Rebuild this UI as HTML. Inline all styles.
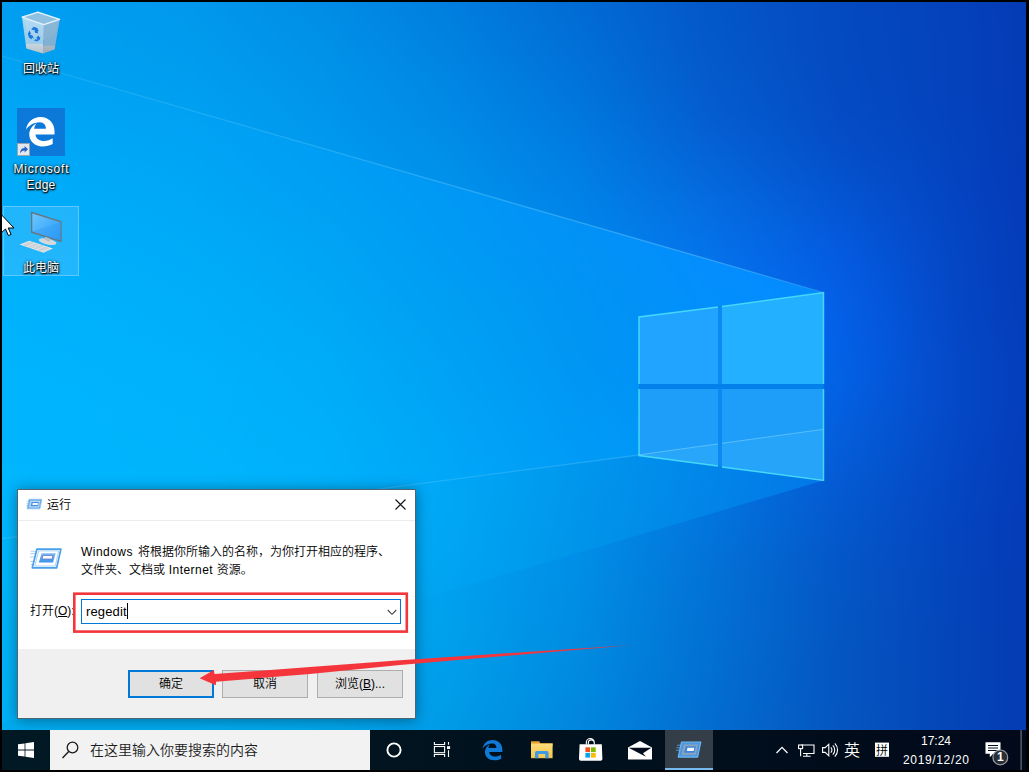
<!DOCTYPE html>
<html lang="zh-CN">
<head>
<meta charset="utf-8">
<title>运行</title>
<style>
*{box-sizing:border-box;margin:0;padding:0}
html,body{width:1029px;height:772px;overflow:hidden;background:#000}
body{position:relative;font-family:"Liberation Sans","Noto Sans CJK SC",sans-serif;font-size:12px;color:#000;font-weight:350}
.abs{position:absolute}
#wall{position:absolute;left:0;top:0;width:1029px;height:772px;display:block}
/* desktop icons */
.dlabel{position:absolute;width:76px;text-align:center;color:#fff;font-size:12px;line-height:17px;font-weight:400;
 text-shadow:0 1px 2px rgba(0,0,0,.95),0 0 3px rgba(0,0,0,.8),1px 1px 1px rgba(0,0,0,.9)}
#sel{position:absolute;left:3px;top:206px;width:76px;height:70px;background:rgba(120,200,255,.28);border:1px solid rgba(150,215,255,.55)}
/* taskbar */
#taskbar{position:absolute;left:2px;top:730px;width:1024px;height:40px;
 background:linear-gradient(90deg,#011924 0%,#01141f 36%,#010e1c 72%,#02091a 100%)}
#search{position:absolute;left:48px;top:0;width:320px;height:40px;background:#f2f2f2;color:#1b1b1b;font-size:14px;line-height:40px;padding-left:40px;white-space:nowrap}
#active{position:absolute;left:663px;top:0;width:48px;height:40px;background:#343e49}
#active i{position:absolute;left:0;bottom:0;width:48px;height:2px;background:#76b9ed}
.tray{position:absolute;color:#fff;white-space:nowrap}
/* dialog */
#dlg{position:absolute;left:17px;top:489px;width:399px;height:230px;background:#fff;border:1px solid rgba(8,40,62,.72);box-shadow:0 1px 13px rgba(0,0,0,.38)}
#dlg .title{position:absolute;left:29px;top:7px;font-size:12px;line-height:17px}
#dlg .sep{position:absolute;left:0;top:30px;width:397px;height:1px;background:#ececec}
#dlg .msg{position:absolute;left:63px;top:53px;font-size:12px;line-height:18px;white-space:nowrap;word-spacing:1.800px}
.ls{letter-spacing:.45px}
#dlg .lbl{position:absolute;left:12px;top:113px;font-size:12px;line-height:17px}
#dlg .inp{position:absolute;left:63px;top:109px;width:320px;height:25px;border:1px solid #0078d7;background:#fff;font-size:13px;line-height:23px;padding-left:4px;letter-spacing:.15px}
#dlg .foot{position:absolute;left:0;top:159px;width:397px;height:69px;background:#f0f0f0}
.btn{position:absolute;top:180px;width:86px;height:28px;background:#e1e1e1;border:1px solid #adadad;text-align:center;font-size:12px;line-height:27px}
.btn.def{border:2px solid #0078d7;line-height:25px}
u{text-decoration:underline}
.caret{display:inline-block;width:1px;height:16px;background:#000;vertical-align:-3px}
</style>
</head>
<body>
<svg id="wall" width="1029" height="772" viewBox="0 0 1029 772">
<defs>
<linearGradient id="u0" gradientUnits="userSpaceOnUse" x1="-64" y1="0" x2="1093" y2="0"><stop offset="0" stop-color="#009bf0"/><stop offset="0.1111" stop-color="#0099ee"/><stop offset="0.2222" stop-color="#0094ea"/><stop offset="0.3333" stop-color="#0088e4"/><stop offset="0.4444" stop-color="#0079dc"/><stop offset="0.5556" stop-color="#0168d2"/><stop offset="0.6667" stop-color="#0356c7"/><stop offset="0.7778" stop-color="#0449bf"/><stop offset="0.8889" stop-color="#0440b9"/><stop offset="1" stop-color="#0435b0"/></linearGradient>
<linearGradient id="u1" gradientUnits="userSpaceOnUse" x1="-64" y1="0" x2="1093" y2="0"><stop offset="0" stop-color="#009cf1"/><stop offset="0.1111" stop-color="#009bef"/><stop offset="0.2222" stop-color="#0096ec"/><stop offset="0.3333" stop-color="#008be5"/><stop offset="0.4444" stop-color="#007cde"/><stop offset="0.5556" stop-color="#016ad3"/><stop offset="0.6667" stop-color="#0357c8"/><stop offset="0.7778" stop-color="#0449c0"/><stop offset="0.8889" stop-color="#0440b9"/><stop offset="1" stop-color="#0435b0"/></linearGradient>
<linearGradient id="u2" gradientUnits="userSpaceOnUse" x1="-64" y1="0" x2="1093" y2="0"><stop offset="0" stop-color="#009ef1"/><stop offset="0.1111" stop-color="#009df0"/><stop offset="0.2222" stop-color="#0099ed"/><stop offset="0.3333" stop-color="#008ee7"/><stop offset="0.4444" stop-color="#007fdf"/><stop offset="0.5556" stop-color="#016cd5"/><stop offset="0.6667" stop-color="#0358c9"/><stop offset="0.7778" stop-color="#044ac0"/><stop offset="0.8889" stop-color="#0441ba"/><stop offset="1" stop-color="#0435b0"/></linearGradient>
<linearGradient id="u3" gradientUnits="userSpaceOnUse" x1="-64" y1="0" x2="1093" y2="0"><stop offset="0" stop-color="#00a0f2"/><stop offset="0.1111" stop-color="#009ff1"/><stop offset="0.2222" stop-color="#009bee"/><stop offset="0.3333" stop-color="#0091e9"/><stop offset="0.4444" stop-color="#0082e1"/><stop offset="0.5556" stop-color="#016fd7"/><stop offset="0.6667" stop-color="#0459ca"/><stop offset="0.7778" stop-color="#044ac1"/><stop offset="0.8889" stop-color="#0441bb"/><stop offset="1" stop-color="#0436b0"/></linearGradient>
<linearGradient id="u4" gradientUnits="userSpaceOnUse" x1="-64" y1="0" x2="1093" y2="0"><stop offset="0" stop-color="#00a1f3"/><stop offset="0.1111" stop-color="#00a1f1"/><stop offset="0.2222" stop-color="#009df0"/><stop offset="0.3333" stop-color="#0094eb"/><stop offset="0.4444" stop-color="#0086e4"/><stop offset="0.5556" stop-color="#0073da"/><stop offset="0.6667" stop-color="#045bcc"/><stop offset="0.7778" stop-color="#044bc2"/><stop offset="0.8889" stop-color="#0441bb"/><stop offset="1" stop-color="#0435b0"/></linearGradient>
<linearGradient id="u5" gradientUnits="userSpaceOnUse" x1="-64" y1="0" x2="1093" y2="0"><stop offset="0" stop-color="#00a3f3"/><stop offset="0.1111" stop-color="#00a3f2"/><stop offset="0.2222" stop-color="#00a0f1"/><stop offset="0.3333" stop-color="#0096ed"/><stop offset="0.4444" stop-color="#0089e6"/><stop offset="0.5556" stop-color="#0077dd"/><stop offset="0.6667" stop-color="#045dcf"/><stop offset="0.7778" stop-color="#044cc4"/><stop offset="0.8889" stop-color="#0441bc"/><stop offset="1" stop-color="#0435b0"/></linearGradient>
<linearGradient id="u6" gradientUnits="userSpaceOnUse" x1="-64" y1="0" x2="1093" y2="0"><stop offset="0" stop-color="#00a5f4"/><stop offset="0.1111" stop-color="#00a4f3"/><stop offset="0.2222" stop-color="#00a2f2"/><stop offset="0.3333" stop-color="#0099ef"/><stop offset="0.4444" stop-color="#008de8"/><stop offset="0.5556" stop-color="#007be1"/><stop offset="0.6667" stop-color="#0462d5"/><stop offset="0.7778" stop-color="#044ec8"/><stop offset="0.8889" stop-color="#0442bd"/><stop offset="1" stop-color="#0435af"/></linearGradient>
<linearGradient id="u7" gradientUnits="userSpaceOnUse" x1="-64" y1="0" x2="1093" y2="0"><stop offset="0" stop-color="#00a7f4"/><stop offset="0.1111" stop-color="#00a6f4"/><stop offset="0.2222" stop-color="#00a3f3"/><stop offset="0.3333" stop-color="#009cf0"/><stop offset="0.4444" stop-color="#0090ea"/><stop offset="0.5556" stop-color="#007fe4"/><stop offset="0.6667" stop-color="#0467db"/><stop offset="0.7778" stop-color="#0452ce"/><stop offset="0.8889" stop-color="#0442bf"/><stop offset="1" stop-color="#0434af"/></linearGradient>
<linearGradient id="u8" gradientUnits="userSpaceOnUse" x1="-64" y1="0" x2="1093" y2="0"><stop offset="0" stop-color="#00a8f5"/><stop offset="0.1111" stop-color="#00a8f5"/><stop offset="0.2222" stop-color="#00a5f4"/><stop offset="0.3333" stop-color="#009ef2"/><stop offset="0.4444" stop-color="#0093ed"/><stop offset="0.5556" stop-color="#0083e8"/><stop offset="0.6667" stop-color="#046de2"/><stop offset="0.7778" stop-color="#0456d5"/><stop offset="0.8889" stop-color="#0443c1"/><stop offset="1" stop-color="#0434af"/></linearGradient>
<linearGradient id="u9" gradientUnits="userSpaceOnUse" x1="-64" y1="0" x2="1093" y2="0"><stop offset="0" stop-color="#00aaf5"/><stop offset="0.1111" stop-color="#00a9f5"/><stop offset="0.2222" stop-color="#00a7f5"/><stop offset="0.3333" stop-color="#00a1f3"/><stop offset="0.4444" stop-color="#0096ef"/><stop offset="0.5556" stop-color="#0186eb"/><stop offset="0.6667" stop-color="#0471e8"/><stop offset="0.7778" stop-color="#045add"/><stop offset="0.8889" stop-color="#0444c2"/><stop offset="1" stop-color="#0434ae"/></linearGradient>
<linearGradient id="u10" gradientUnits="userSpaceOnUse" x1="-64" y1="0" x2="1093" y2="0"><stop offset="0" stop-color="#00abf6"/><stop offset="0.1111" stop-color="#00aaf6"/><stop offset="0.2222" stop-color="#00a8f5"/><stop offset="0.3333" stop-color="#00a3f4"/><stop offset="0.4444" stop-color="#0098f0"/><stop offset="0.5556" stop-color="#0189ee"/><stop offset="0.6667" stop-color="#0474ec"/><stop offset="0.7778" stop-color="#045de3"/><stop offset="0.8889" stop-color="#0445c3"/><stop offset="1" stop-color="#0434ae"/></linearGradient>
<linearGradient id="u11" gradientUnits="userSpaceOnUse" x1="-64" y1="0" x2="1093" y2="0"><stop offset="0" stop-color="#00acf6"/><stop offset="0.1111" stop-color="#00abf6"/><stop offset="0.2222" stop-color="#00aaf6"/><stop offset="0.3333" stop-color="#00a4f4"/><stop offset="0.4444" stop-color="#009af2"/><stop offset="0.5556" stop-color="#018bf0"/><stop offset="0.6667" stop-color="#0377ee"/><stop offset="0.7778" stop-color="#0460e7"/><stop offset="0.8889" stop-color="#0445c3"/><stop offset="1" stop-color="#0434ae"/></linearGradient>
<linearGradient id="u12" gradientUnits="userSpaceOnUse" x1="-64" y1="0" x2="1093" y2="0"><stop offset="0" stop-color="#00adf6"/><stop offset="0.1111" stop-color="#00acf6"/><stop offset="0.2222" stop-color="#00abf6"/><stop offset="0.3333" stop-color="#00a6f5"/><stop offset="0.4444" stop-color="#009cf3"/><stop offset="0.5556" stop-color="#018df1"/><stop offset="0.6667" stop-color="#0378ef"/><stop offset="0.7778" stop-color="#0361e8"/><stop offset="0.8889" stop-color="#0446c5"/><stop offset="1" stop-color="#0434ae"/></linearGradient>
<linearGradient id="u13" gradientUnits="userSpaceOnUse" x1="-64" y1="0" x2="1093" y2="0"><stop offset="0" stop-color="#00aef6"/><stop offset="0.1111" stop-color="#00adf6"/><stop offset="0.2222" stop-color="#00acf6"/><stop offset="0.3333" stop-color="#00a7f5"/><stop offset="0.4444" stop-color="#009ef3"/><stop offset="0.5556" stop-color="#018ef1"/><stop offset="0.6667" stop-color="#0379ee"/><stop offset="0.7778" stop-color="#0362e6"/><stop offset="0.8889" stop-color="#0447c6"/><stop offset="1" stop-color="#0434af"/></linearGradient>
<linearGradient id="u14" gradientUnits="userSpaceOnUse" x1="-64" y1="0" x2="1093" y2="0"><stop offset="0" stop-color="#00aef6"/><stop offset="0.1111" stop-color="#00aef6"/><stop offset="0.2222" stop-color="#00adf6"/><stop offset="0.3333" stop-color="#00a8f6"/><stop offset="0.4444" stop-color="#009ff3"/><stop offset="0.5556" stop-color="#018ff0"/><stop offset="0.6667" stop-color="#0379eb"/><stop offset="0.7778" stop-color="#0361e2"/><stop offset="0.8889" stop-color="#0447c6"/><stop offset="1" stop-color="#0434af"/></linearGradient>
<linearGradient id="u15" gradientUnits="userSpaceOnUse" x1="-64" y1="0" x2="1093" y2="0"><stop offset="0" stop-color="#00aff6"/><stop offset="0.1111" stop-color="#00aef6"/><stop offset="0.2222" stop-color="#00adf6"/><stop offset="0.3333" stop-color="#00a9f6"/><stop offset="0.4444" stop-color="#00a0f3"/><stop offset="0.5556" stop-color="#018fef"/><stop offset="0.6667" stop-color="#0378e8"/><stop offset="0.7778" stop-color="#045fdc"/><stop offset="0.8889" stop-color="#0446c4"/><stop offset="1" stop-color="#0434af"/></linearGradient>
<linearGradient id="u16" gradientUnits="userSpaceOnUse" x1="-64" y1="0" x2="1093" y2="0"><stop offset="0" stop-color="#00aff5"/><stop offset="0.1111" stop-color="#00aff6"/><stop offset="0.2222" stop-color="#00aef6"/><stop offset="0.3333" stop-color="#00aaf5"/><stop offset="0.4444" stop-color="#00a0f2"/><stop offset="0.5556" stop-color="#008fed"/><stop offset="0.6667" stop-color="#0377e4"/><stop offset="0.7778" stop-color="#045dd7"/><stop offset="0.8889" stop-color="#0445c2"/><stop offset="1" stop-color="#0434af"/></linearGradient>
<linearGradient id="u17" gradientUnits="userSpaceOnUse" x1="-64" y1="0" x2="1093" y2="0"><stop offset="0" stop-color="#00aff5"/><stop offset="0.1111" stop-color="#00aff5"/><stop offset="0.2222" stop-color="#00aef5"/><stop offset="0.3333" stop-color="#00aaf5"/><stop offset="0.4444" stop-color="#00a1f2"/><stop offset="0.5556" stop-color="#008feb"/><stop offset="0.6667" stop-color="#0376df"/><stop offset="0.7778" stop-color="#045ad1"/><stop offset="0.8889" stop-color="#0444c0"/><stop offset="1" stop-color="#0334af"/></linearGradient>
<linearGradient id="u18" gradientUnits="userSpaceOnUse" x1="-64" y1="0" x2="1093" y2="0"><stop offset="0" stop-color="#00aff4"/><stop offset="0.1111" stop-color="#00aff5"/><stop offset="0.2222" stop-color="#00aef5"/><stop offset="0.3333" stop-color="#00abf4"/><stop offset="0.4444" stop-color="#00a1f0"/><stop offset="0.5556" stop-color="#008ee9"/><stop offset="0.6667" stop-color="#0275dc"/><stop offset="0.7778" stop-color="#0459cc"/><stop offset="0.8889" stop-color="#0443be"/><stop offset="1" stop-color="#0333af"/></linearGradient>
<linearGradient id="u19" gradientUnits="userSpaceOnUse" x1="-64" y1="0" x2="1093" y2="0"><stop offset="0" stop-color="#00aff4"/><stop offset="0.1111" stop-color="#00aff4"/><stop offset="0.2222" stop-color="#00aef4"/><stop offset="0.3333" stop-color="#00abf3"/><stop offset="0.4444" stop-color="#00a1ef"/><stop offset="0.5556" stop-color="#008ee7"/><stop offset="0.6667" stop-color="#0273d8"/><stop offset="0.7778" stop-color="#0457c8"/><stop offset="0.8889" stop-color="#0443bc"/><stop offset="1" stop-color="#0333af"/></linearGradient>
<linearGradient id="u20" gradientUnits="userSpaceOnUse" x1="-64" y1="0" x2="1093" y2="0"><stop offset="0" stop-color="#00aef3"/><stop offset="0.1111" stop-color="#00aef3"/><stop offset="0.2222" stop-color="#00aef3"/><stop offset="0.3333" stop-color="#00aaf2"/><stop offset="0.4444" stop-color="#00a0ee"/><stop offset="0.5556" stop-color="#008de5"/><stop offset="0.6667" stop-color="#0272d6"/><stop offset="0.7778" stop-color="#0457c6"/><stop offset="0.8889" stop-color="#0443ba"/><stop offset="1" stop-color="#0333af"/></linearGradient>
<linearGradient id="u21" gradientUnits="userSpaceOnUse" x1="-64" y1="0" x2="1093" y2="0"><stop offset="0" stop-color="#00aef2"/><stop offset="0.1111" stop-color="#00aef2"/><stop offset="0.2222" stop-color="#00adf2"/><stop offset="0.3333" stop-color="#00aaf1"/><stop offset="0.4444" stop-color="#00a0ec"/><stop offset="0.5556" stop-color="#008ce2"/><stop offset="0.6667" stop-color="#0271d5"/><stop offset="0.7778" stop-color="#0457c4"/><stop offset="0.8889" stop-color="#0443b9"/><stop offset="1" stop-color="#0333af"/></linearGradient>
<linearGradient id="u22" gradientUnits="userSpaceOnUse" x1="-64" y1="0" x2="1093" y2="0"><stop offset="0" stop-color="#00adf2"/><stop offset="0.1111" stop-color="#00adf1"/><stop offset="0.2222" stop-color="#00adf1"/><stop offset="0.3333" stop-color="#00a9f0"/><stop offset="0.4444" stop-color="#009eeb"/><stop offset="0.5556" stop-color="#008be0"/><stop offset="0.6667" stop-color="#0270d4"/><stop offset="0.7778" stop-color="#0456c3"/><stop offset="0.8889" stop-color="#0443b8"/><stop offset="1" stop-color="#0333af"/></linearGradient>
<linearGradient id="u23" gradientUnits="userSpaceOnUse" x1="-64" y1="0" x2="1093" y2="0"><stop offset="0" stop-color="#00adf1"/><stop offset="0.1111" stop-color="#00acf0"/><stop offset="0.2222" stop-color="#00acf0"/><stop offset="0.3333" stop-color="#00a8ef"/><stop offset="0.4444" stop-color="#009de9"/><stop offset="0.5556" stop-color="#0089df"/><stop offset="0.6667" stop-color="#026fd2"/><stop offset="0.7778" stop-color="#0456c2"/><stop offset="0.8889" stop-color="#0443b8"/><stop offset="1" stop-color="#0333af"/></linearGradient>
<linearGradient id="u24" gradientUnits="userSpaceOnUse" x1="-64" y1="0" x2="1093" y2="0"><stop offset="0" stop-color="#00acf0"/><stop offset="0.1111" stop-color="#00abef"/><stop offset="0.2222" stop-color="#00abef"/><stop offset="0.3333" stop-color="#00a7ed"/><stop offset="0.4444" stop-color="#009be7"/><stop offset="0.5556" stop-color="#0187dd"/><stop offset="0.6667" stop-color="#036dd1"/><stop offset="0.7778" stop-color="#0556c1"/><stop offset="0.8889" stop-color="#0443b7"/><stop offset="1" stop-color="#0333af"/></linearGradient>
<linearGradient id="u25" gradientUnits="userSpaceOnUse" x1="-64" y1="0" x2="1093" y2="0"><stop offset="0" stop-color="#00acef"/><stop offset="0.1111" stop-color="#00aaee"/><stop offset="0.2222" stop-color="#00a9ee"/><stop offset="0.3333" stop-color="#00a5ec"/><stop offset="0.4444" stop-color="#0099e5"/><stop offset="0.5556" stop-color="#0185dc"/><stop offset="0.6667" stop-color="#036dd0"/><stop offset="0.7778" stop-color="#0556c1"/><stop offset="0.8889" stop-color="#0443b7"/><stop offset="1" stop-color="#0433af"/></linearGradient>
<linearGradient id="u26" gradientUnits="userSpaceOnUse" x1="-64" y1="0" x2="1093" y2="0"><stop offset="0" stop-color="#00abee"/><stop offset="0.1111" stop-color="#00a9ed"/><stop offset="0.2222" stop-color="#00a8ed"/><stop offset="0.3333" stop-color="#00a3ea"/><stop offset="0.4444" stop-color="#0097e4"/><stop offset="0.5556" stop-color="#0183da"/><stop offset="0.6667" stop-color="#036cce"/><stop offset="0.7778" stop-color="#0556c1"/><stop offset="0.8889" stop-color="#0543b7"/><stop offset="1" stop-color="#0433ae"/></linearGradient>
<linearGradient id="u27" gradientUnits="userSpaceOnUse" x1="-64" y1="0" x2="1093" y2="0"><stop offset="0" stop-color="#00abee"/><stop offset="0.1111" stop-color="#00a8ec"/><stop offset="0.2222" stop-color="#00a7eb"/><stop offset="0.3333" stop-color="#00a1e9"/><stop offset="0.4444" stop-color="#0195e2"/><stop offset="0.5556" stop-color="#0182d9"/><stop offset="0.6667" stop-color="#036bcd"/><stop offset="0.7778" stop-color="#0556c0"/><stop offset="0.8889" stop-color="#0543b7"/><stop offset="1" stop-color="#0433ae"/></linearGradient>
<linearGradient id="u28" gradientUnits="userSpaceOnUse" x1="-64" y1="0" x2="1093" y2="0"><stop offset="0" stop-color="#00aaed"/><stop offset="0.1111" stop-color="#00a8eb"/><stop offset="0.2222" stop-color="#00a5ea"/><stop offset="0.3333" stop-color="#009fe7"/><stop offset="0.4444" stop-color="#0193e1"/><stop offset="0.5556" stop-color="#0280d7"/><stop offset="0.6667" stop-color="#036bcc"/><stop offset="0.7778" stop-color="#0556c0"/><stop offset="0.8889" stop-color="#0543b6"/><stop offset="1" stop-color="#0433ae"/></linearGradient>
<linearGradient id="w0" gradientUnits="userSpaceOnUse" x1="-64" y1="0" x2="1093" y2="0"><stop offset="0" stop-color="#009ff1"/><stop offset="0.1111" stop-color="#009cf1"/><stop offset="0.2222" stop-color="#0198f1"/><stop offset="0.3333" stop-color="#0193f2"/><stop offset="0.4444" stop-color="#028df5"/><stop offset="0.5556" stop-color="#0487f8"/><stop offset="0.6667" stop-color="#0583fd"/><stop offset="0.7778" stop-color="#077eff"/><stop offset="0.8889" stop-color="#087aff"/><stop offset="1" stop-color="#0876ff"/></linearGradient>
<linearGradient id="w1" gradientUnits="userSpaceOnUse" x1="-64" y1="0" x2="1093" y2="0"><stop offset="0" stop-color="#00a1f2"/><stop offset="0.1111" stop-color="#009ef2"/><stop offset="0.2222" stop-color="#009af2"/><stop offset="0.3333" stop-color="#0195f3"/><stop offset="0.4444" stop-color="#028ff5"/><stop offset="0.5556" stop-color="#0389f8"/><stop offset="0.6667" stop-color="#0584fd"/><stop offset="0.7778" stop-color="#0680ff"/><stop offset="0.8889" stop-color="#077bff"/><stop offset="1" stop-color="#0877ff"/></linearGradient>
<linearGradient id="w2" gradientUnits="userSpaceOnUse" x1="-64" y1="0" x2="1093" y2="0"><stop offset="0" stop-color="#00a3f3"/><stop offset="0.1111" stop-color="#00a0f3"/><stop offset="0.2222" stop-color="#009df3"/><stop offset="0.3333" stop-color="#0197f3"/><stop offset="0.4444" stop-color="#0190f5"/><stop offset="0.5556" stop-color="#038af8"/><stop offset="0.6667" stop-color="#0585fd"/><stop offset="0.7778" stop-color="#0681ff"/><stop offset="0.8889" stop-color="#077dff"/><stop offset="1" stop-color="#0878ff"/></linearGradient>
<linearGradient id="w3" gradientUnits="userSpaceOnUse" x1="-64" y1="0" x2="1093" y2="0"><stop offset="0" stop-color="#00a5f4"/><stop offset="0.1111" stop-color="#00a2f4"/><stop offset="0.2222" stop-color="#009ff3"/><stop offset="0.3333" stop-color="#0099f3"/><stop offset="0.4444" stop-color="#0192f5"/><stop offset="0.5556" stop-color="#038cf8"/><stop offset="0.6667" stop-color="#0587fd"/><stop offset="0.7778" stop-color="#0682ff"/><stop offset="0.8889" stop-color="#077eff"/><stop offset="1" stop-color="#087aff"/></linearGradient>
<linearGradient id="w4" gradientUnits="userSpaceOnUse" x1="-64" y1="0" x2="1093" y2="0"><stop offset="0" stop-color="#00a7f6"/><stop offset="0.1111" stop-color="#00a5f5"/><stop offset="0.2222" stop-color="#00a1f4"/><stop offset="0.3333" stop-color="#009bf3"/><stop offset="0.4444" stop-color="#0194f4"/><stop offset="0.5556" stop-color="#038df8"/><stop offset="0.6667" stop-color="#0588fd"/><stop offset="0.7778" stop-color="#0684ff"/><stop offset="0.8889" stop-color="#077fff"/><stop offset="1" stop-color="#077bff"/></linearGradient>
<linearGradient id="w5" gradientUnits="userSpaceOnUse" x1="-64" y1="0" x2="1093" y2="0"><stop offset="0" stop-color="#00aaf7"/><stop offset="0.1111" stop-color="#00a7f7"/><stop offset="0.2222" stop-color="#00a4f5"/><stop offset="0.3333" stop-color="#009df4"/><stop offset="0.4444" stop-color="#0195f4"/><stop offset="0.5556" stop-color="#028ef8"/><stop offset="0.6667" stop-color="#0589fe"/><stop offset="0.7778" stop-color="#0685ff"/><stop offset="0.8889" stop-color="#0781ff"/><stop offset="1" stop-color="#077cff"/></linearGradient>
<linearGradient id="w6" gradientUnits="userSpaceOnUse" x1="-64" y1="0" x2="1093" y2="0"><stop offset="0" stop-color="#00acf8"/><stop offset="0.1111" stop-color="#00aaf8"/><stop offset="0.2222" stop-color="#00a6f6"/><stop offset="0.3333" stop-color="#009ff4"/><stop offset="0.4444" stop-color="#0097f4"/><stop offset="0.5556" stop-color="#028ff7"/><stop offset="0.6667" stop-color="#048afe"/><stop offset="0.7778" stop-color="#0686ff"/><stop offset="0.8889" stop-color="#0682ff"/><stop offset="1" stop-color="#077dff"/></linearGradient>
<linearGradient id="w7" gradientUnits="userSpaceOnUse" x1="-64" y1="0" x2="1093" y2="0"><stop offset="0" stop-color="#00aefa"/><stop offset="0.1111" stop-color="#00acfa"/><stop offset="0.2222" stop-color="#00a8f7"/><stop offset="0.3333" stop-color="#00a1f4"/><stop offset="0.4444" stop-color="#0099f4"/><stop offset="0.5556" stop-color="#0190f7"/><stop offset="0.6667" stop-color="#048bfe"/><stop offset="0.7778" stop-color="#0588ff"/><stop offset="0.8889" stop-color="#0683ff"/><stop offset="1" stop-color="#077fff"/></linearGradient>
<linearGradient id="w8" gradientUnits="userSpaceOnUse" x1="-64" y1="0" x2="1093" y2="0"><stop offset="0" stop-color="#00b0fb"/><stop offset="0.1111" stop-color="#00aefb"/><stop offset="0.2222" stop-color="#00aaf8"/><stop offset="0.3333" stop-color="#00a4f5"/><stop offset="0.4444" stop-color="#009af4"/><stop offset="0.5556" stop-color="#0192f6"/><stop offset="0.6667" stop-color="#048dfe"/><stop offset="0.7778" stop-color="#0589ff"/><stop offset="0.8889" stop-color="#0685ff"/><stop offset="1" stop-color="#0680ff"/></linearGradient>
<linearGradient id="w9" gradientUnits="userSpaceOnUse" x1="-64" y1="0" x2="1093" y2="0"><stop offset="0" stop-color="#00b1fc"/><stop offset="0.1111" stop-color="#00b0fc"/><stop offset="0.2222" stop-color="#00acf9"/><stop offset="0.3333" stop-color="#00a6f5"/><stop offset="0.4444" stop-color="#009cf4"/><stop offset="0.5556" stop-color="#0193f4"/><stop offset="0.6667" stop-color="#048efd"/><stop offset="0.7778" stop-color="#058aff"/><stop offset="0.8889" stop-color="#0586ff"/><stop offset="1" stop-color="#0681ff"/></linearGradient>
<linearGradient id="w10" gradientUnits="userSpaceOnUse" x1="-64" y1="0" x2="1093" y2="0"><stop offset="0" stop-color="#00b3fd"/><stop offset="0.1111" stop-color="#00b1fc"/><stop offset="0.2222" stop-color="#00aef9"/><stop offset="0.3333" stop-color="#00a8f6"/><stop offset="0.4444" stop-color="#009ef3"/><stop offset="0.5556" stop-color="#0094f3"/><stop offset="0.6667" stop-color="#038ffc"/><stop offset="0.7778" stop-color="#048bff"/><stop offset="0.8889" stop-color="#0587ff"/><stop offset="1" stop-color="#0682ff"/></linearGradient>
<linearGradient id="w11" gradientUnits="userSpaceOnUse" x1="-64" y1="0" x2="1093" y2="0"><stop offset="0" stop-color="#00b4fd"/><stop offset="0.1111" stop-color="#00b2fd"/><stop offset="0.2222" stop-color="#00affa"/><stop offset="0.3333" stop-color="#00aaf7"/><stop offset="0.4444" stop-color="#00a0f4"/><stop offset="0.5556" stop-color="#0095f2"/><stop offset="0.6667" stop-color="#028ffb"/><stop offset="0.7778" stop-color="#048cff"/><stop offset="0.8889" stop-color="#0588ff"/><stop offset="1" stop-color="#0684ff"/></linearGradient>
<linearGradient id="w12" gradientUnits="userSpaceOnUse" x1="-64" y1="0" x2="1093" y2="0"><stop offset="0" stop-color="#00b4fd"/><stop offset="0.1111" stop-color="#00b3fd"/><stop offset="0.2222" stop-color="#00b1fb"/><stop offset="0.3333" stop-color="#00acf8"/><stop offset="0.4444" stop-color="#00a2f5"/><stop offset="0.5556" stop-color="#0096f3"/><stop offset="0.6667" stop-color="#0290fa"/><stop offset="0.7778" stop-color="#038dff"/><stop offset="0.8889" stop-color="#0489ff"/><stop offset="1" stop-color="#0585ff"/></linearGradient>
<linearGradient id="w13" gradientUnits="userSpaceOnUse" x1="-64" y1="0" x2="1093" y2="0"><stop offset="0" stop-color="#00b5fd"/><stop offset="0.1111" stop-color="#00b4fd"/><stop offset="0.2222" stop-color="#00b2fb"/><stop offset="0.3333" stop-color="#00adf9"/><stop offset="0.4444" stop-color="#00a3f6"/><stop offset="0.5556" stop-color="#0098f4"/><stop offset="0.6667" stop-color="#0191f9"/><stop offset="0.7778" stop-color="#038efe"/><stop offset="0.8889" stop-color="#048aff"/><stop offset="1" stop-color="#0586ff"/></linearGradient>
<linearGradient id="w14" gradientUnits="userSpaceOnUse" x1="-64" y1="0" x2="1093" y2="0"><stop offset="0" stop-color="#00b6fd"/><stop offset="0.1111" stop-color="#00b4fd"/><stop offset="0.2222" stop-color="#00b3fb"/><stop offset="0.3333" stop-color="#00aff9"/><stop offset="0.4444" stop-color="#00a5f7"/><stop offset="0.5556" stop-color="#0099f5"/><stop offset="0.6667" stop-color="#0193f9"/><stop offset="0.7778" stop-color="#038ffe"/><stop offset="0.8889" stop-color="#048bff"/><stop offset="1" stop-color="#0587ff"/></linearGradient>
<linearGradient id="w15" gradientUnits="userSpaceOnUse" x1="-64" y1="0" x2="1093" y2="0"><stop offset="0" stop-color="#00b6fd"/><stop offset="0.1111" stop-color="#00b5fd"/><stop offset="0.2222" stop-color="#00b4fc"/><stop offset="0.3333" stop-color="#00b0fa"/><stop offset="0.4444" stop-color="#00a6f8"/><stop offset="0.5556" stop-color="#009bf6"/><stop offset="0.6667" stop-color="#0194f9"/><stop offset="0.7778" stop-color="#0290fe"/><stop offset="0.8889" stop-color="#038cff"/><stop offset="1" stop-color="#0488ff"/></linearGradient>
<linearGradient id="w16" gradientUnits="userSpaceOnUse" x1="-64" y1="0" x2="1093" y2="0"><stop offset="0" stop-color="#00b7fd"/><stop offset="0.1111" stop-color="#00b5fd"/><stop offset="0.2222" stop-color="#00b5fc"/><stop offset="0.3333" stop-color="#00b1fb"/><stop offset="0.4444" stop-color="#00a7f9"/><stop offset="0.5556" stop-color="#009df7"/><stop offset="0.6667" stop-color="#0195fa"/><stop offset="0.7778" stop-color="#0291fe"/><stop offset="0.8889" stop-color="#038dff"/><stop offset="1" stop-color="#0489ff"/></linearGradient>
<linearGradient id="w17" gradientUnits="userSpaceOnUse" x1="-64" y1="0" x2="1093" y2="0"><stop offset="0" stop-color="#00b8fd"/><stop offset="0.1111" stop-color="#00b6fd"/><stop offset="0.2222" stop-color="#00b5fc"/><stop offset="0.3333" stop-color="#00b1fb"/><stop offset="0.4444" stop-color="#00a8f9"/><stop offset="0.5556" stop-color="#009ef8"/><stop offset="0.6667" stop-color="#0197fa"/><stop offset="0.7778" stop-color="#0292fe"/><stop offset="0.8889" stop-color="#038eff"/><stop offset="1" stop-color="#048aff"/></linearGradient>
<linearGradient id="w18" gradientUnits="userSpaceOnUse" x1="-64" y1="0" x2="1093" y2="0"><stop offset="0" stop-color="#00b8fe"/><stop offset="0.1111" stop-color="#00b7fd"/><stop offset="0.2222" stop-color="#00b6fd"/><stop offset="0.3333" stop-color="#00b2fc"/><stop offset="0.4444" stop-color="#00a9fa"/><stop offset="0.5556" stop-color="#00a0f9"/><stop offset="0.6667" stop-color="#0099fb"/><stop offset="0.7778" stop-color="#0294fe"/><stop offset="0.8889" stop-color="#0390ff"/><stop offset="1" stop-color="#048bff"/></linearGradient>
<linearGradient id="w19" gradientUnits="userSpaceOnUse" x1="-64" y1="0" x2="1093" y2="0"><stop offset="0" stop-color="#00b9fe"/><stop offset="0.1111" stop-color="#00b8fd"/><stop offset="0.2222" stop-color="#00b6fd"/><stop offset="0.3333" stop-color="#00b2fc"/><stop offset="0.4444" stop-color="#00aafb"/><stop offset="0.5556" stop-color="#00a1fa"/><stop offset="0.6667" stop-color="#009afb"/><stop offset="0.7778" stop-color="#0195fe"/><stop offset="0.8889" stop-color="#0291ff"/><stop offset="1" stop-color="#048dff"/></linearGradient>
<linearGradient id="w20" gradientUnits="userSpaceOnUse" x1="-64" y1="0" x2="1093" y2="0"><stop offset="0" stop-color="#00bafe"/><stop offset="0.1111" stop-color="#00b8fe"/><stop offset="0.2222" stop-color="#00b7fd"/><stop offset="0.3333" stop-color="#00b3fc"/><stop offset="0.4444" stop-color="#00abfb"/><stop offset="0.5556" stop-color="#00a3fb"/><stop offset="0.6667" stop-color="#009cfc"/><stop offset="0.7778" stop-color="#0196ff"/><stop offset="0.8889" stop-color="#0292ff"/><stop offset="1" stop-color="#038eff"/></linearGradient>
<linearGradient id="f0" gradientUnits="userSpaceOnUse" x1="-64" y1="0" x2="1093" y2="0"><stop offset="0" stop-color="#00beff"/><stop offset="0.1111" stop-color="#00b9ff"/><stop offset="0.2222" stop-color="#00b6ff"/><stop offset="0.3333" stop-color="#00b1fe"/><stop offset="0.4444" stop-color="#00a8f9"/><stop offset="0.5556" stop-color="#0098f1"/><stop offset="0.6667" stop-color="#0188ed"/><stop offset="0.7778" stop-color="#0378eb"/><stop offset="0.8889" stop-color="#0569e9"/><stop offset="1" stop-color="#065ce7"/></linearGradient>
<linearGradient id="f1" gradientUnits="userSpaceOnUse" x1="-64" y1="0" x2="1093" y2="0"><stop offset="0" stop-color="#00bdff"/><stop offset="0.1111" stop-color="#00b8ff"/><stop offset="0.2222" stop-color="#00b5fe"/><stop offset="0.3333" stop-color="#00b1fd"/><stop offset="0.4444" stop-color="#00a8f8"/><stop offset="0.5556" stop-color="#0097f0"/><stop offset="0.6667" stop-color="#0187eb"/><stop offset="0.7778" stop-color="#0377ea"/><stop offset="0.8889" stop-color="#0568e8"/><stop offset="1" stop-color="#065be5"/></linearGradient>
<linearGradient id="f2" gradientUnits="userSpaceOnUse" x1="-64" y1="0" x2="1093" y2="0"><stop offset="0" stop-color="#00bbff"/><stop offset="0.1111" stop-color="#00b6fe"/><stop offset="0.2222" stop-color="#00b3fd"/><stop offset="0.3333" stop-color="#00b0fb"/><stop offset="0.4444" stop-color="#00a7f7"/><stop offset="0.5556" stop-color="#0097ee"/><stop offset="0.6667" stop-color="#0186e9"/><stop offset="0.7778" stop-color="#0376e9"/><stop offset="0.8889" stop-color="#0567e6"/><stop offset="1" stop-color="#065ae4"/></linearGradient>
<linearGradient id="f3" gradientUnits="userSpaceOnUse" x1="-64" y1="0" x2="1093" y2="0"><stop offset="0" stop-color="#00bafe"/><stop offset="0.1111" stop-color="#00b5fc"/><stop offset="0.2222" stop-color="#00b2fc"/><stop offset="0.3333" stop-color="#00affa"/><stop offset="0.4444" stop-color="#00a7f5"/><stop offset="0.5556" stop-color="#0096ec"/><stop offset="0.6667" stop-color="#0185e8"/><stop offset="0.7778" stop-color="#0375e7"/><stop offset="0.8889" stop-color="#0566e5"/><stop offset="1" stop-color="#0659e3"/></linearGradient>
<linearGradient id="f4" gradientUnits="userSpaceOnUse" x1="-64" y1="0" x2="1093" y2="0"><stop offset="0" stop-color="#00b9fd"/><stop offset="0.1111" stop-color="#00b4fb"/><stop offset="0.2222" stop-color="#00b1fa"/><stop offset="0.3333" stop-color="#00aef8"/><stop offset="0.4444" stop-color="#00a6f4"/><stop offset="0.5556" stop-color="#0095eb"/><stop offset="0.6667" stop-color="#0184e6"/><stop offset="0.7778" stop-color="#0374e5"/><stop offset="0.8889" stop-color="#0565e4"/><stop offset="1" stop-color="#0658e1"/></linearGradient>
<linearGradient id="f5" gradientUnits="userSpaceOnUse" x1="-64" y1="0" x2="1093" y2="0"><stop offset="0" stop-color="#00b7fb"/><stop offset="0.1111" stop-color="#00b2fa"/><stop offset="0.2222" stop-color="#00aff9"/><stop offset="0.3333" stop-color="#00adf7"/><stop offset="0.4444" stop-color="#00a5f2"/><stop offset="0.5556" stop-color="#0094e9"/><stop offset="0.6667" stop-color="#0183e5"/><stop offset="0.7778" stop-color="#0373e4"/><stop offset="0.8889" stop-color="#0565e2"/><stop offset="1" stop-color="#0657e0"/></linearGradient>
<linearGradient id="f6" gradientUnits="userSpaceOnUse" x1="-64" y1="0" x2="1093" y2="0"><stop offset="0" stop-color="#00b6fa"/><stop offset="0.1111" stop-color="#00b1f9"/><stop offset="0.2222" stop-color="#00aef7"/><stop offset="0.3333" stop-color="#00abf5"/><stop offset="0.4444" stop-color="#00a3f0"/><stop offset="0.5556" stop-color="#0093e8"/><stop offset="0.6667" stop-color="#0182e4"/><stop offset="0.7778" stop-color="#0372e2"/><stop offset="0.8889" stop-color="#0564e1"/><stop offset="1" stop-color="#0656de"/></linearGradient>
<linearGradient id="f7" gradientUnits="userSpaceOnUse" x1="-64" y1="0" x2="1093" y2="0"><stop offset="0" stop-color="#00b5f9"/><stop offset="0.1111" stop-color="#00b0f7"/><stop offset="0.2222" stop-color="#00adf6"/><stop offset="0.3333" stop-color="#00a9f3"/><stop offset="0.4444" stop-color="#00a2ee"/><stop offset="0.5556" stop-color="#0092e7"/><stop offset="0.6667" stop-color="#0181e3"/><stop offset="0.7778" stop-color="#0372e1"/><stop offset="0.8889" stop-color="#0563df"/><stop offset="1" stop-color="#0656dd"/></linearGradient>
<linearGradient id="f8" gradientUnits="userSpaceOnUse" x1="-64" y1="0" x2="1093" y2="0"><stop offset="0" stop-color="#00b4f8"/><stop offset="0.1111" stop-color="#00aff6"/><stop offset="0.2222" stop-color="#00abf4"/><stop offset="0.3333" stop-color="#00a8f2"/><stop offset="0.4444" stop-color="#00a0ed"/><stop offset="0.5556" stop-color="#0091e6"/><stop offset="0.6667" stop-color="#0181e2"/><stop offset="0.7778" stop-color="#0371e0"/><stop offset="0.8889" stop-color="#0462de"/><stop offset="1" stop-color="#0655db"/></linearGradient>
<linearGradient id="f9" gradientUnits="userSpaceOnUse" x1="-64" y1="0" x2="1093" y2="0"><stop offset="0" stop-color="#00b4f7"/><stop offset="0.1111" stop-color="#00aef5"/><stop offset="0.2222" stop-color="#00aaf3"/><stop offset="0.3333" stop-color="#00a6f0"/><stop offset="0.4444" stop-color="#009eeb"/><stop offset="0.5556" stop-color="#018fe5"/><stop offset="0.6667" stop-color="#0280e1"/><stop offset="0.7778" stop-color="#0370de"/><stop offset="0.8889" stop-color="#0461dc"/><stop offset="1" stop-color="#0654da"/></linearGradient>
<linearGradient id="f10" gradientUnits="userSpaceOnUse" x1="-64" y1="0" x2="1093" y2="0"><stop offset="0" stop-color="#00b3f6"/><stop offset="0.1111" stop-color="#00adf4"/><stop offset="0.2222" stop-color="#00a9f2"/><stop offset="0.3333" stop-color="#00a4ee"/><stop offset="0.4444" stop-color="#009cea"/><stop offset="0.5556" stop-color="#018ee4"/><stop offset="0.6667" stop-color="#027ee0"/><stop offset="0.7778" stop-color="#036fdd"/><stop offset="0.8889" stop-color="#0461db"/><stop offset="1" stop-color="#0653d9"/></linearGradient>
<linearGradient id="f11" gradientUnits="userSpaceOnUse" x1="-64" y1="0" x2="1093" y2="0"><stop offset="0" stop-color="#00b2f5"/><stop offset="0.1111" stop-color="#00acf3"/><stop offset="0.2222" stop-color="#00a7f0"/><stop offset="0.3333" stop-color="#00a2ed"/><stop offset="0.4444" stop-color="#009ae8"/><stop offset="0.5556" stop-color="#018ce3"/><stop offset="0.6667" stop-color="#027dde"/><stop offset="0.7778" stop-color="#036edc"/><stop offset="0.8889" stop-color="#0460d9"/><stop offset="1" stop-color="#0652d7"/></linearGradient>
<linearGradient id="f12" gradientUnits="userSpaceOnUse" x1="-64" y1="0" x2="1093" y2="0"><stop offset="0" stop-color="#00b1f4"/><stop offset="0.1111" stop-color="#00abf2"/><stop offset="0.2222" stop-color="#00a6ef"/><stop offset="0.3333" stop-color="#00a0eb"/><stop offset="0.4444" stop-color="#0098e7"/><stop offset="0.5556" stop-color="#018be2"/><stop offset="0.6667" stop-color="#027cdd"/><stop offset="0.7778" stop-color="#036dda"/><stop offset="0.8889" stop-color="#045fd8"/><stop offset="1" stop-color="#0651d6"/></linearGradient>
<linearGradient id="f13" gradientUnits="userSpaceOnUse" x1="-64" y1="0" x2="1093" y2="0"><stop offset="0" stop-color="#00b0f3"/><stop offset="0.1111" stop-color="#00aaf0"/><stop offset="0.2222" stop-color="#00a5ee"/><stop offset="0.3333" stop-color="#009eea"/><stop offset="0.4444" stop-color="#0196e5"/><stop offset="0.5556" stop-color="#0189e0"/><stop offset="0.6667" stop-color="#027bdc"/><stop offset="0.7778" stop-color="#036cd9"/><stop offset="0.8889" stop-color="#045ed7"/><stop offset="1" stop-color="#0651d4"/></linearGradient>
<linearGradient id="f14" gradientUnits="userSpaceOnUse" x1="-64" y1="0" x2="1093" y2="0"><stop offset="0" stop-color="#00aff2"/><stop offset="0.1111" stop-color="#00a9ef"/><stop offset="0.2222" stop-color="#00a3ec"/><stop offset="0.3333" stop-color="#009de8"/><stop offset="0.4444" stop-color="#0194e4"/><stop offset="0.5556" stop-color="#0188df"/><stop offset="0.6667" stop-color="#027adb"/><stop offset="0.7778" stop-color="#036bd8"/><stop offset="0.8889" stop-color="#045dd5"/><stop offset="1" stop-color="#0650d3"/></linearGradient>
<filter id="vb" x="-2%" y="-10%" width="104%" height="120%" color-interpolation-filters="sRGB"><feGaussianBlur stdDeviation="0 13"/></filter>
<clipPath id="clipScreen"><rect x="2" y="2" width="1024" height="768"/></clipPath>
<clipPath id="clipW"><polygon points="823.5,292.5 -10.0,52.6 -10.0,540.2 639.0,455.5 639.0,317.0"/></clipPath>
<clipPath id="clipF"><polygon points="639.0,455.5 -10.0,540.2 -10.0,726.7 823.5,480.5 722.0,467.0 718.0,466.0"/></clipPath>
<linearGradient id="rayL" gradientUnits="userSpaceOnUse" x1="0" y1="0" x2="823" y2="0">
<stop offset="0" stop-color="#8fe0ff" stop-opacity=".14"/><stop offset=".5" stop-color="#8fe0ff" stop-opacity=".26"/><stop offset=".85" stop-color="#8fe0ff" stop-opacity=".34"/><stop offset="1" stop-color="#8fe0ff" stop-opacity=".2"/>
</linearGradient>
</defs>
<rect width="1029" height="772" fill="#000"/>
<g clip-path="url(#clipScreen)">
<g filter="url(#vb)">
<rect x="-64" y="-64" width="1157" height="33" fill="url(#u0)"/>
<rect x="-64" y="-32" width="1157" height="33" fill="url(#u1)"/>
<rect x="-64" y="0" width="1157" height="33" fill="url(#u2)"/>
<rect x="-64" y="32" width="1157" height="33" fill="url(#u3)"/>
<rect x="-64" y="64" width="1157" height="33" fill="url(#u4)"/>
<rect x="-64" y="96" width="1157" height="33" fill="url(#u5)"/>
<rect x="-64" y="128" width="1157" height="33" fill="url(#u6)"/>
<rect x="-64" y="160" width="1157" height="33" fill="url(#u7)"/>
<rect x="-64" y="192" width="1157" height="33" fill="url(#u8)"/>
<rect x="-64" y="224" width="1157" height="33" fill="url(#u9)"/>
<rect x="-64" y="256" width="1157" height="33" fill="url(#u10)"/>
<rect x="-64" y="288" width="1157" height="33" fill="url(#u11)"/>
<rect x="-64" y="320" width="1157" height="33" fill="url(#u12)"/>
<rect x="-64" y="352" width="1157" height="33" fill="url(#u13)"/>
<rect x="-64" y="384" width="1157" height="33" fill="url(#u14)"/>
<rect x="-64" y="416" width="1157" height="33" fill="url(#u15)"/>
<rect x="-64" y="448" width="1157" height="33" fill="url(#u16)"/>
<rect x="-64" y="480" width="1157" height="33" fill="url(#u17)"/>
<rect x="-64" y="512" width="1157" height="33" fill="url(#u18)"/>
<rect x="-64" y="544" width="1157" height="33" fill="url(#u19)"/>
<rect x="-64" y="576" width="1157" height="33" fill="url(#u20)"/>
<rect x="-64" y="608" width="1157" height="33" fill="url(#u21)"/>
<rect x="-64" y="640" width="1157" height="33" fill="url(#u22)"/>
<rect x="-64" y="672" width="1157" height="33" fill="url(#u23)"/>
<rect x="-64" y="704" width="1157" height="33" fill="url(#u24)"/>
<rect x="-64" y="736" width="1157" height="33" fill="url(#u25)"/>
<rect x="-64" y="768" width="1157" height="33" fill="url(#u26)"/>
<rect x="-64" y="800" width="1157" height="33" fill="url(#u27)"/>
<rect x="-64" y="832" width="1157" height="33" fill="url(#u28)"/>
</g>
<g clip-path="url(#clipW)"><g filter="url(#vb)">
<rect x="-64" y="-32" width="1157" height="33" fill="url(#w0)"/>
<rect x="-64" y="0" width="1157" height="33" fill="url(#w1)"/>
<rect x="-64" y="32" width="1157" height="33" fill="url(#w2)"/>
<rect x="-64" y="64" width="1157" height="33" fill="url(#w3)"/>
<rect x="-64" y="96" width="1157" height="33" fill="url(#w4)"/>
<rect x="-64" y="128" width="1157" height="33" fill="url(#w5)"/>
<rect x="-64" y="160" width="1157" height="33" fill="url(#w6)"/>
<rect x="-64" y="192" width="1157" height="33" fill="url(#w7)"/>
<rect x="-64" y="224" width="1157" height="33" fill="url(#w8)"/>
<rect x="-64" y="256" width="1157" height="33" fill="url(#w9)"/>
<rect x="-64" y="288" width="1157" height="33" fill="url(#w10)"/>
<rect x="-64" y="320" width="1157" height="33" fill="url(#w11)"/>
<rect x="-64" y="352" width="1157" height="33" fill="url(#w12)"/>
<rect x="-64" y="384" width="1157" height="33" fill="url(#w13)"/>
<rect x="-64" y="416" width="1157" height="33" fill="url(#w14)"/>
<rect x="-64" y="448" width="1157" height="33" fill="url(#w15)"/>
<rect x="-64" y="480" width="1157" height="33" fill="url(#w16)"/>
<rect x="-64" y="512" width="1157" height="33" fill="url(#w17)"/>
<rect x="-64" y="544" width="1157" height="33" fill="url(#w18)"/>
<rect x="-64" y="576" width="1157" height="33" fill="url(#w19)"/>
<rect x="-64" y="608" width="1157" height="33" fill="url(#w20)"/>
</g></g>
<g clip-path="url(#clipF)"><g filter="url(#vb)">
<rect x="-64" y="384" width="1157" height="33" fill="url(#f0)"/>
<rect x="-64" y="416" width="1157" height="33" fill="url(#f1)"/>
<rect x="-64" y="448" width="1157" height="33" fill="url(#f2)"/>
<rect x="-64" y="480" width="1157" height="33" fill="url(#f3)"/>
<rect x="-64" y="512" width="1157" height="33" fill="url(#f4)"/>
<rect x="-64" y="544" width="1157" height="33" fill="url(#f5)"/>
<rect x="-64" y="576" width="1157" height="33" fill="url(#f6)"/>
<rect x="-64" y="608" width="1157" height="33" fill="url(#f7)"/>
<rect x="-64" y="640" width="1157" height="33" fill="url(#f8)"/>
<rect x="-64" y="672" width="1157" height="33" fill="url(#f9)"/>
<rect x="-64" y="704" width="1157" height="33" fill="url(#f10)"/>
<rect x="-64" y="736" width="1157" height="33" fill="url(#f11)"/>
<rect x="-64" y="768" width="1157" height="33" fill="url(#f12)"/>
<rect x="-64" y="800" width="1157" height="33" fill="url(#f13)"/>
<rect x="-64" y="832" width="1157" height="33" fill="url(#f14)"/>
</g></g>
<line x1="823.5" y1="292.5" x2="2" y2="56.1" stroke="url(#rayL)" stroke-width="1.3"/>
<line x1="639" y1="455" x2="2" y2="538.6" stroke="#8fe0ff" stroke-opacity=".22" stroke-width="1.3"/>
<polygon points="639,317 823.500,292.500 823.500,480.500 639,455.500" fill="#0a8af2"/>
<rect x="639" y="384" width="184.500" height="5" fill="#0480ea"/>
<polygon points="639,317 718,307 718,384 639,384" fill="#20a4ff"/>
<polygon points="722,306.5 823.5,292.5 823.5,384 722,384" fill="#22b0ff"/>
<polygon points="639,389 718,389 718,466 639,455.5" fill="#1e9ef8"/>
<polygon points="722,389 823.5,389 823.5,480.5 722,467" fill="#1e9ef8"/>
<polygon points="639,454.5 718,443.5 718,466 639,455.5" fill="#3ab4ff" fill-opacity=".35"/>
<polygon points="722,443 823.5,429 823.5,480.5 722,467" fill="#3ab4ff" fill-opacity=".3"/>
<path d="M639,454.800L718,443.900M722,443.300L823.500,429.300" stroke="#7fd4ff" stroke-opacity=".55" stroke-width="1" fill="none"/>
<g fill="none" stroke="#4fe2f6" stroke-width="1.5" stroke-opacity=".85">
<polyline points="639,384 639,317 718,307"/>
<polyline points="722,306.5 823.5,292.5 823.5,384"/>
<polyline points="639,389 639,455.5 718,466"/>
<polyline points="722,467 823.5,480.5 823.5,389"/>
</g>
</g>
</svg>

<div id="sel"></div>
<svg class="abs" style="left:0;top:0" width="100" height="290" viewBox="0 0 100 290">
<defs>
<linearGradient id="binL" x1="0" y1="0" x2="0" y2="1"><stop offset="0" stop-color="#b4dcf4"/><stop offset=".72" stop-color="#a4cfec"/><stop offset=".74" stop-color="#d4d8dc"/><stop offset="1" stop-color="#c4c8cc"/></linearGradient>
<linearGradient id="binR" x1="0" y1="0" x2="0" y2="1"><stop offset="0" stop-color="#8cb8d8"/><stop offset=".76" stop-color="#86b0d0"/><stop offset=".78" stop-color="#b4b8c0"/><stop offset="1" stop-color="#a8acb4"/></linearGradient>
<linearGradient id="scr" x1="0" y1="0" x2="1" y2="1"><stop offset="0" stop-color="#6cc8ff"/><stop offset=".5" stop-color="#48b0fc"/><stop offset="1" stop-color="#2c9cf4"/></linearGradient>
<path id="edgeE" d="M1 10.6C2 4.5 6.5.8 12.2.8 18.6.8 23 5.6 23 11.6V14.2H8.4C8.6 17.4 11.4 19.2 14.8 19.2 17.4 19.2 19.8 18.4 21.6 17.2V21.6C19.4 22.9 16.6 23.4 13.8 23.4 8 23.4 3.6 19.6 3.6 14.2 3.6 10.6 5.8 7.4 9.4 5.6 8 7 7.6 8.4 7.4 9.8H16.4C16.4 7.2 15 4.8 11.6 4.8 7 4.8 2.8 7.6 1 10.6Z"/>
</defs>
<!-- recycle bin -->
<polygon points="22,17.2 37.9,12.2 59.7,19.4 43.7,24.7" fill="#98c8e8"/>
<polygon points="24,18 37.9,13.6 57.6,19.6 54,36 43.7,40 27,34" fill="#8ec0e2"/>
<polygon points="22,17.2 43.7,24.7 43,53.5 26.3,48.4" fill="url(#binL)" fill-opacity=".93"/>
<polygon points="43.7,24.7 59.7,19.4 54.6,49.5 43,53.5" fill="url(#binR)" fill-opacity=".95"/>
<polygon points="22,17.2 37.9,12.2 59.7,19.4 43.7,24.7" fill="none" stroke="#e4f2fc" stroke-width="1.3" stroke-linejoin="round"/>
<g fill="#1a78dc">
<path d="M31.2 29.2l2.6-2.4 3.4 1.2 1.6 3.2-1.4.2 1 2-3.4-.6-.6-3.2-1.2.6z"/>
<path d="M29.4 30.6l-1.6 3.4 1.2 3.6 2.6 1.8.2-1.6 1.8.8-1-3.2-2.6-.6 1-1.4z"/>
<path d="M33.6 40.2l3.2 1.2 3-1.6.6-3-1.4.4-.2-2-2.4 2.4 1 2.2-1.8-.6z"/>
</g>
<!-- edge -->
<rect x="17" y="108" width="48" height="48" fill="#0c78d8"/>
<use href="#edgeE" transform="translate(24.6,116) scale(1.3)" fill="#fff"/>
<rect x="17.5" y="143.5" width="12" height="12" fill="#e4e8ee" stroke="#98a4b0" stroke-width="1"/>
<path d="M20 153.5c0-3.6 1.6-5.6 4.6-5.6v-1.9l3.4 3.2-3.4 3.2v-1.9c-2 0-3.4.9-4.6 3z" fill="#2a62c8"/>
<!-- this pc -->
<polygon points="31,211.6 61.6,221.2 61.6,242.2 31,232.8" fill="#6a747e"/>
<polygon points="32.3,213.4 60.4,222.2 60.4,240.4 32.3,231.6" fill="url(#scr)"/>
<polygon points="32.3,231.6 60.4,222.2 60.4,240.4" fill="#2a98f4" fill-opacity=".35"/>
<ellipse cx="47.6" cy="241.6" rx="9" ry="2.9" transform="rotate(12 47.6 241.6)" fill="#d4d8dc"/>
<path d="M45 236.8l5 1.6v3l-5-1.2z" fill="#b8c0c8"/>
<polygon points="19.6,244.6 29.2,240.8 53,248.4 43.6,252.8" fill="#e4e8ea"/>
<g stroke="#c0c6cc" stroke-width=".7" fill="none">
<path d="M22 243.7l23.8 7.9M24.4 242.7l23.8 7.9M26.8 241.8l23.8 7.9"/>
<path d="M24 246l9.500-4M28.800 247.600l9.500-4M33.600 249.200l9.500-4M38.400 250.800l9.500-4"/>
</g>
<!-- cursor -->
<path d="M1.300 214.600v18.200l4.200-3.800 2.900 6.600 2.700-1.200-2.900-6.400h5.800z" fill="#fff" stroke="#000" stroke-width="1" stroke-linejoin="miter"/>
</svg>
<div class="dlabel" style="left:3px;top:61px">回收站</div>
<div class="dlabel" style="left:3px;top:160.500px;line-height:16px"><span style="letter-spacing:.8px;margin-right:-.8px">Microsoft</span><br><span style="letter-spacing:.2px">Edge</span></div>
<div class="dlabel" style="left:3px;top:259.500px">此电脑</div>
<div class="abs" style="left:0;top:0;width:2px;height:772px;background:#000"></div>

<div id="dlg">
<svg class="abs" style="left:0;top:0" width="397" height="100" viewBox="0 0 397 100">
<defs>
<linearGradient id="runG" x1="0" y1="0" x2="0" y2="1"><stop offset="0" stop-color="#7cc0f6"/><stop offset="1" stop-color="#3a92ea"/></linearGradient>
<g id="runIcon">
<path d="M.6 3.200h6M.2 5.600h6.500M0 9h5.500M.4 13.400h4M.6 16.500h2.500" stroke="#a8d2f6" stroke-width="1" fill="none"/>
<polygon points="6.900,1.100 30.900,1.100 26.700,19.800 2.300,19.800" fill="#fff" stroke="#4a9fea" stroke-width="1.700" stroke-linejoin="round"/>
<polygon points="8.600,2.900 28.700,2.900 25.300,18 4.800,18" fill="none" stroke="#9ccdf6" stroke-width=".9"/>
<polygon points="11.600,5.300 25.800,5.300 23,14.600 8.800,14.600" fill="url(#runG)"/>
<polygon points="12.800,7.400 23,7.400 22.100,11.100 12.100,11.100" fill="#fafcff" stroke="#6c7acc" stroke-width=".9" stroke-linejoin="round"/>
</g>
</defs>
<g transform="translate(0,0)">
<path d="M8.400 11.500h2.400M8.200 13.500h2.200M8 15.500h2" stroke="#b5d8f6" stroke-width=".8" fill="none"/>
<polygon points="11,9.300 23.800,9.300 21.900,18.800 9.050,18.800" fill="#66a9e8" stroke="#8cc2f0" stroke-width=".8" stroke-linejoin="round"/>
<polygon points="12.300,10.700 22.200,10.700 20.900,17.400 10.900,17.400" fill="#b9daf6"/>
<polygon points="13.600,11.900 20.900,11.900 20,16.200 12.700,16.200" fill="#4a8fdc"/>
<polygon points="14.700,12.900 20,12.900 19.600,14.900 14.300,14.900" fill="#f4f8fe"/>
</g>
<use href="#runIcon" transform="translate(12,58)"/>
<path d="M377.500 9.500l10 10M387.500 9.500l-10 10" stroke="#111" stroke-width="1.100" fill="none"/>
</svg>
<div class="title">运行</div>
<div class="sep"></div>
<div class="msg"><span class="ls">Windows</span> 将根据你所输入的名称，为你打开相应的程序、<br><span style="word-spacing:.4px">文件夹、文档或 <span class="ls">Internet</span> 资源。</span></div>
<div class="lbl">打开(<u>O</u>):</div>
<div class="inp">regedit<span class="caret"></span>
<svg class="abs" style="right:3px;top:8.500px" width="10" height="7" viewBox="0 0 10 7"><path d="M.7 1l4.300 4.300L9.300 1" stroke="#444" stroke-width="1.100" fill="none"/></svg>
</div>
<div class="foot"></div>
<div class="btn def" style="left:110px">确定</div>
<div class="btn" style="left:204px">取消</div>
<div class="btn" style="left:299px">浏览(<u>B</u>)...</div>
</div>

<div id="taskbar">
<div id="search">在这里输入你要搜索的内容</div>
<div id="active"><i></i></div>
<svg class="abs" style="left:0;top:0" width="1024" height="40" viewBox="2 730 1024 40">
<defs>
<linearGradient id="fold" x1="0" y1="0" x2="0" y2="1"><stop offset="0" stop-color="#fddc7c"/><stop offset="1" stop-color="#f5c64a"/></linearGradient>
</defs>
<!-- start -->
<g fill="#fff">
<polygon points="18,744.300 24.600,743.400 24.600,749.600 18,749.600"/>
<polygon points="25.400,743.300 34,742 34,749.600 25.400,749.600"/>
<polygon points="18,750.400 24.600,750.400 24.600,756.600 18,755.700"/>
<polygon points="25.400,750.400 34,750.400 34,758 25.400,756.700"/>
</g>
<!-- search glass -->
<circle cx="72.500" cy="747.500" r="5.300" fill="none" stroke="#1b1b1b" stroke-width="1.300"/>
<path d="M68.700 751.500l-6.200 6.400" stroke="#1b1b1b" stroke-width="1.400" fill="none"/>
<!-- cortana -->
<circle cx="394" cy="750" r="6.600" fill="none" stroke="#fff" stroke-width="1.900"/>
<!-- task view -->
<g fill="none" stroke="#fff" stroke-width="1.100">
<rect x="434.400" y="746.500" width="10.200" height="6.200"/>
<path d="M434.400 742v2.500h10.200v-2.500M434.400 757v-2.500h10.200v2.500"/>
<path d="M448.500 742v2.800M448.500 750.300v6.700"/>
</g>
<rect x="447" y="746.200" width="3.100" height="2.800" fill="#fff"/>
<!-- edge -->
<use href="#edgeE" transform="translate(481.700,739.300) scale(.9)" fill="#107ad8"/>
<!-- explorer -->
<path d="M531 741.200h8.200l1.200 2h12.200v3h-21.600z" fill="#e8a530"/>
<rect x="531" y="743.600" width="21.600" height="14.600" fill="url(#fold)"/>
<path d="M535 758.200v-5.400q0-1.800 1.800-1.800h10q1.800 0 1.800 1.800v5.400h-3.400v-4.200h-6.800v4.200z" fill="#3f9ae6"/>
<!-- store -->
<path d="M586.300 744.500v-2a4 4 0 0 1 8 0v2M588.300 744.500v-1.600a3 3 0 0 1 6 0" fill="none" stroke="#fff" stroke-width="1.100"/>
<path d="M579.600 744.200h22.200l.6 14.800a1.800 1.800 0 0 1-1.800 1.800h-19.800a1.800 1.800 0 0 1-1.800-1.800z" fill="#fff"/>
<rect x="585.400" y="747.300" width="4.700" height="4.700" fill="#f25022"/><rect x="591" y="747.300" width="4.700" height="4.700" fill="#7fba00"/>
<rect x="585.400" y="752.900" width="4.700" height="4.700" fill="#00a4ef"/><rect x="591" y="752.900" width="4.700" height="4.700" fill="#ffb900"/>
<!-- mail -->
<path d="M628 747.500l12-6.500 12 6.500v12h-24z" fill="#fff"/>
<path d="M628.600 747.800l22.800 0-8.400 5.400 3 3.600-6.400-3.200z" fill="#020c1c"/>
<!-- run -->
<g transform="translate(676.400,742) scale(.72)">
<path d="M1 4.500h6M.2 8h5M-.4 11.500h4.500" stroke="#5d9fdc" stroke-width="1.300" fill="none"/>
<polygon points="7,0 34,0 29.500,21 2.500,21" fill="#4f97dc" stroke="#6fbaf2" stroke-width="1.500" stroke-linejoin="round"/>
<polygon points="10.400,3.400 29.800,3.400 26.800,17.600 7.400,17.600" fill="#8aa4c0"/>
<polygon points="12.800,5.800 27,5.800 25,15 10.800,15" fill="#3f84d6"/>
<polygon points="15.400,8 25,8 24,12.400 14.400,12.400" fill="#f4f8fe"/>
</g>
<!-- tray chevron -->
<path d="M776.500 753l5.500-5.600 5.500 5.600" fill="none" stroke="#fff" stroke-width="1.300"/>
<!-- network -->
<g fill="none" stroke="#fff" stroke-width="1.100">
<path d="M801.500 745h12.500v8.500h-11"/>
<path d="M803 756.200h7.600M806.800 753.500v2.700"/>
<rect x="798.600" y="745" width="4" height="3.600"/>
<path d="M800.600 748.600v7.600"/>
</g>
<!-- volume -->
<g fill="none" stroke="#fff" stroke-width="1.100">
<path d="M822.600 747.600h2.600l3.600-3.400v11.600l-3.600-3.400h-2.600z"/>
<path d="M830.800 747.400a3.600 3.600 0 0 1 0 5.200M832.800 745.400a6.400 6.400 0 0 1 0 9.200M834.800 743.400a9.300 9.300 0 0 1 0 13.200"/>
</g>
<!-- ime box -->
<rect x="875" y="742.600" width="14" height="14.200" fill="#fff"/>
<!-- notification -->
<path d="M985.500 742.300h15v11.400h-7.300l-3.400 3.500v-3.500h-4.300z" fill="#fff"/>
<path d="M988 745.500h10M988 748h10M988 750.500h10" stroke="#020c1c" stroke-width="1"/>
<circle cx="1000.300" cy="757.400" r="7.400" fill="#2a2d33" stroke="#9a9ea4" stroke-width="1.200"/>
<rect x="1020.500" y="730" width="1.200" height="40" fill="#6c7078"/>
</svg>
<div class="tray" style="left:842px;top:11px;font-size:16px;line-height:20px">英</div>
<div class="tray" style="left:874px;top:13px;font-size:12px;line-height:17px;color:#000">拼</div>
<div class="tray" style="left:886px;top:2px;width:96px;text-align:center;font-size:12px;line-height:18px">17:24</div>
<div class="tray" style="left:886px;top:21px;width:96.600px;text-align:center;font-size:12px;line-height:18px;letter-spacing:.65px">2019/12/20</div>
<div class="tray" style="left:995px;top:20px;font-size:12px;line-height:14px;font-weight:bold">1</div>
</div>

<svg class="abs" style="left:0;top:0;pointer-events:none" width="1029" height="772" viewBox="0 0 1029 772">
<rect x="74.300" y="593.700" width="332.500" height="37.900" fill="none" stroke="#f2363b" stroke-width="2.600"/>
<polygon points="633,645 400,660.300 310,667.100 214.500,674.100 213.900,670 199.600,678.300 215.900,685.200 216,681.700 310,673.900 400,664.900" fill="#f4363c"/>
</svg>

</body>
</html>
